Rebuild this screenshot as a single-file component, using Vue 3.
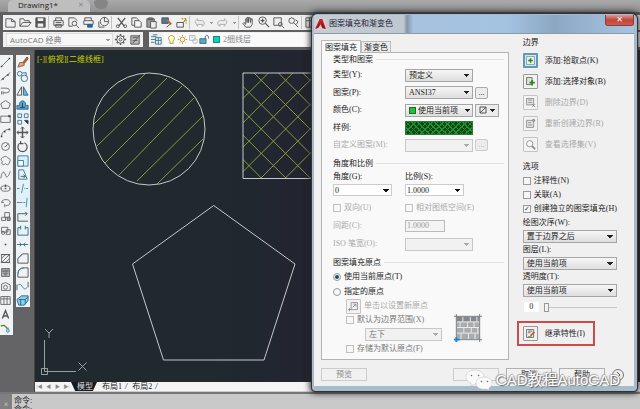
<script setup>
import { ref } from 'vue'

const icons = {
  new: '<path d="M2 3h6l4 3v6H2z"/><path d="M8 3v3h4"/>',
  open: '<path d="M1 11V3h4l1 2h5v2M1 11l3-4h9l-3 4z"/>',
  save: '<path fill="#555" d="M2 2h10v10H2z"/><path fill="#eee" stroke="none" d="M4 2.5h6v3H4zM4 8h6v3.500H4z"/>',
  print: '<path d="M4 5V2h6v3M2 5h10v5H2zM4 9h6v3H4z"/><path d="M4 7h6"/>',
  preview: '<path d="M2 2h6l3 3M2 2v9h4"/><circle cx="8" cy="8" r="2.500"/><path d="M10 10l3 3"/>',
  plot: '<path d="M3 5V2h7v3M2 5h10v4H2z"/><path fill="#28649c" stroke="#28649c" d="M6 9h5v3H6z"/>',
  publish: '<circle cx="8" cy="6" r="4.500"/><path d="M8 1v5h4M2 6v6h6"/>',
  cut: '<path d="M3 2l7 9M11 2L4 11" stroke-width="1.400"/><circle cx="3" cy="11" r="1.500"/><circle cx="11" cy="11" r="1.500"/>',
  copyclip: '<path d="M2 2h5l2 2v6H2z"/><path fill="#f4f4f4" d="M5 5h5l2 2v5H5z"/>',
  paste: '<path fill="#999" d="M2 3h8v9H2z"/><path d="M4 2h4v2H4z"/><path fill="#eee" d="M6 6h6v7H6z"/>',
  match: '<path fill="#5572a5" d="M2 2h7v6H2z"/><path stroke="#c66a26" stroke-width="2" d="M8 4l4 5"/><path d="M7 12l5-4"/>',
  block: '<path d="M2 7h7v5H2zM9 7l3-4"/><path stroke="#d5a000" stroke-width="1.500" stroke-dasharray="2 1" d="M7 3h5v5"/>',
  undo: '<path stroke="#aaa" d="M2 6l3-3v2h4c4 0 4 5 1 6V9H5v2z"/>',
  redo: '<path stroke="#aaa" d="M12 6L9 3v2H5c-4 0-4 5-1 6V9h5v2z"/>',
  hand: '<path d="M4 12L1 8l1-1 2 2V3h1.500v4V1.500H7V7l.5-5H9v5l1-4h1v6l-2 3z"/>',
  zoom: '<circle cx="6" cy="5" r="4"/><path d="M4 5h4M6 3v4M9 8l4 4" stroke-width="1.300"/>',
  zoomwin: '<path d="M2 2h8v8H2z"/><circle cx="9" cy="9" r="2"/><path d="M11 11l2 2"/>',
  zoomprev: '<circle cx="5" cy="5" r="3"/><path d="M7 7l5 5M9 4l3 2-2 3"/>',
  gear: '<circle cx="7" cy="7" r="4"/><circle cx="7" cy="7" r="1.500"/><path d="M7 1v2M7 11v2M1 7h2M11 7h2M3 3l1 1M10 10l1 1M3 11l1-1M10 4l1-1" stroke-width="1.600"/>',
  custom: '<path d="M2 3h9v9H2z" fill="#bbb"/><path d="M4 5h5M4 8h5M4 11L12 2"/>',
  layers: '<path stroke="#397b94" d="M1 4h6M3 2h5M1 7h5M6 5h6v7H6zM1 10h4M6 8h6M9 5v7"/>',
  bulb: '<path stroke="#998a29" fill="#fff9c4" d="M5 9C2 6 3 2 7 2s5 4 2 7v3H5z"/>',
  sun: '<circle cx="7" cy="7" r="3" stroke="#aa8c28" fill="#fff7b5"/><path stroke="#aa8c28" d="M7 1v2M7 11v2M1 7h2M11 7h2M3 3l1 1M10 10l1 1M3 11l1-1M10 4l1-1"/>',
  vp: '<path stroke="#aaa" d="M2 2h7v6H2zM4 4h3"/><circle cx="9" cy="9" r="3" stroke="#aaa"/>',
  lock: '<path stroke="#216477" fill="#60a6bc" d="M1 6h8v6H1z"/><path stroke="#216477" d="M8 6V3q2-3 4 0v3"/>',
  line: '<path d="M2 12L12 2"/><path d="M1 11h2v2H1zM11 1h2v2h-2z" fill="#444" stroke="none"/>',
  xline: '<path d="M1 12L13 2"/><path d="M3 9h2v2H3zM9 4h2v2H9z" fill="#444" stroke="none"/>',
  pline: '<path d="M1 4h7q4 0 4 3t-4 3H4M2 8v4M4 8v4"/>',
  polygon: '<path d="M7 2l6 4-2 6H3L1 6z"/>',
  rect: '<path d="M1 4h12v8H1z"/><path d="M11 3h2v2h-2z" fill="#444"/>',
  arc: '<path d="M2 12C2 7 6 3 12 3"/><path d="M1 11h2v2H1zM5 5h2v2H5zM11 2h2v2h-2z" fill="#444" stroke="none"/>',
  circle: '<circle cx="7" cy="7" r="5"/><path d="M7 7l3-3M6 7h2"/>',
  cloud: '<path d="M4 3c3-3 6 0 6 1 4 0 3 4 2 5 0 4-4 4-5 2-3 3-6 0-4-3C0 6 2 3 4 3z"/>',
  spline: '<path d="M1 12C3 0 6 4 7 8s4 2 6-5"/>',
  ellipse: '<ellipse cx="7" cy="7" rx="6" ry="3.500"/><path d="M7 2v3M6 7h2M1 7h1M12 7h1" stroke-width="1.600"/>',
  earc: '<path d="M2 7c0-5 11-5 11 0 0 3-3 4-6 4M2 7h3M6 9v4"/>',
  insert: '<path d="M6 2h6v6H6zM2 8h5v4H2z"/><path d="M9 8h4v4H9z" fill="#aaa"/>',
  make: '<path d="M2 3h8v6H2zM8 6h5v6H8z"/><circle cx="4" cy="10" r="2"/>',
  point: '<path d="M6 6h2v2H6z" fill="#444" stroke="none"/>',
  hatch: '<path d="M2 2h10v10H2zM2 7l5-5M2 12L12 2M7 12l5-5M1 2h12M1 12h12"/>',
  gradient: '<path d="M2 2h10v10H2z" fill="#bbb"/><path d="M3 4h8M3 6h8M4 8h6M5 10h4" stroke="#555"/>',
  region: '<path d="M2 12V4l5-2 6 3v7z"/><circle cx="7" cy="8" r="2.500"/>',
  table: '<path d="M1 2h12v10H1zM1 5h12M5 2v10M9 2v10"/>',
  text: '<path d="M3 12L7 2l4 10M4.500 9h5" stroke-width="1.800"/>',
  colors: '<path stroke="#46861e" stroke-width="1.600" d="M1 4q5-3 8 3"/><path stroke="#2374aa" fill="#b6def1" d="M10 6l-2 4q2 4 4 0z"/>',
  erase: '<path d="M8 6l4-5 1 2-4 5z" fill="#bd6c25" stroke="#88502b"/><path d="M2 12l2-5 4 0 1 3z" fill="#e4a478" stroke="#87644e"/>',
  copy: '<g stroke="#337498"><circle cx="4" cy="4" r="2.500"/><circle cx="9" cy="9" r="3.500"/><path d="M7 3h4v3"/></g>',
  mirror: '<path d="M6 3v9H1z"/><path d="M8 3v9h5z" fill="#75b6d5" stroke="#226b91"/>',
  offset: '<path d="M1 12V8h3V5q3-4 6 0v3h3v4z" fill="#62a8cc" stroke="#226b91"/><path d="M4 10h6M7 5v5" stroke="#245"/>',
  array: '<g stroke="#337daa"><path d="M2 2h4v4H2zM9 2h4v4H9zM2 9h4v4H2z"/></g><path d="M9 9h4v4z" fill="#222"/>',
  move: '<path d="M7 1v12M1 7h12" stroke-width="1.500"/><path d="M5 3l2-2 2 2M5 11l2 2 2-2M3 5L1 7l2 2M11 5l2 2-2 2"/>',
  rotate: '<path d="M9 3a5 5 0 1 1-4 0M5 1v3h3" stroke-width="1.300"/>',
  scale: '<path d="M2 2h11v11H2z" stroke="#337daa" fill="#d9f0fb"/><path d="M2 7h6v6H2z" stroke="#337daa" fill="#fff"/>',
  stretch: '<path d="M3 2h5l4 10H3z" stroke="#337daa"/><path d="M5 9h5M8 7l2 2-2 2"/>',
  trim: '<path d="M1 7h3M6 12L8 2M9 7h1M11 7h2" stroke="#4586a6"/>',
  extend: '<path d="M1 7h6" stroke="#777"/><path d="M8 7h2M11 12l1-10" stroke="#4586a6"/>',
  breakat: '<path d="M2 12V4h10M10 2l2 2-2 2M2 12h11"/>',
  breakk: '<path d="M5 4H2v8h11V4h-3M5 2v4M10 2v4" stroke="#28708f"/>',
  join: '<path d="M1 7h12M4 5l2 2-2 2M10 5L8 7l2 2" stroke="#28708f"/>',
  chamfer: '<path d="M2 12V7l5-5h6v10z"/><path d="M2 7l5-5" stroke="#2888bb"/>',
  fillet: '<path d="M2 12V9q0-7 7-7h4v10z"/><path d="M2 9q0-7 7-7" stroke="#2888bb"/>',
  blend: '<path d="M1 11V5M13 2v6"/><path d="M2 6c4-6 5 8 10 2" stroke="#2888bb"/>',
  explode: '<path d="M1 6l5-4h7v5l-4 5H3z" fill="#91cdec" stroke="#226b91"/><path d="M3 6h7v5M5 6v6M10 6l3-3" stroke="#226b91"/>',
  pick: '<path d="M2 2h10v10H2z" fill="#e9f5ee" stroke="#889"/><path d="M7 4v6M4 7h6" stroke="#2e8420" stroke-width="2"/>',
  select: '<path d="M2 2h7v9H2z" fill="#dde6d8"/><path d="M9 5v7M5.500 8.500h7" stroke="#2e8420" stroke-width="2.200"/>',
  remove: '<path d="M2 2h9v8H2z" fill="#ddd"/><path d="M4 4h5M4 7h5M9 9l4 4M13 9l-4 4"/>',
  recreate: '<path d="M2 3h9v9H2z" fill="#ddd"/><path d="M4 6h4M4 9h5"/><circle cx="11" cy="3" r="1.500" fill="#888"/>',
  view: '<circle cx="6" cy="6" r="4" fill="#f5faff"/><path d="M9 9l4 4" stroke-width="2"/>',
  inherit: '<path d="M2 2h9v10H2z" fill="#eee"/><path d="M4 4h5M4 6h3" /><path d="M12 5L7 10" stroke="#b76033" stroke-width="2"/><path d="M4 11h4" stroke="#46861e"/>',
  origin: '<path d="M4 2h8v9H4z" fill="#eee"/><path d="M2 9v4M0 11h4M6 8l4-4M7 4h3v3"/>',
}

const standardBar = [
  ['new', 'open', 'save'],
  ['print', 'preview', 'plot', 'publish'],
  ['cut', 'copyclip', 'paste', 'match', 'block'],
  ['undo', 'drop', 'redo', 'drop'],
  ['hand', 'zoom', 'zoomwin', 'zoomprev'],
  ['table', 'layers'],
]
const drawBar = ['line', 'xline', 'pline', 'polygon', 'rect', 'arc', 'circle', 'cloud', 'spline', 'ellipse', 'earc', 'insert', 'make', 'point', 'hatch', 'gradient', 'region', 'table', 'text', 'colors']
const modifyBar = ['erase', 'copy', 'mirror', 'offset', 'array', 'move', 'rotate', 'scale', 'stretch', 'trim', 'extend', 'breakat', 'breakk', 'join', 'chamfer', 'fillet', 'blend', 'explode']
const boundary = [
  { icon: 'pick', text: '添加:拾取点(K)', on: true },
  { icon: 'select', text: '添加:选择对象(B)' },
  { icon: 'remove', text: '删除边界(D)', off: true },
  { icon: 'recreate', text: '重新创建边界(R)', off: true },
  { icon: 'view', text: '查看选择集(V)', off: true },
]
const optionSelects = [
  { id: 'order', label: '绘图次序(W):', value: '置于边界之后' },
  { id: 'layer', label: '图层(L):', value: '使用当前项' },
  { id: 'alpha', label: '透明度(T):', value: '使用当前项' },
]
const origin = ref('current')
const opacity = ref(0)

// ANSI37 hatch: two families of 45 degree lines, step 24.4 along x
const falling = Array.from({ length: 9 }, (_, i) => 59 + i * 24.4)
const rising = Array.from({ length: 10 }, (_, i) => 317 + i * 24.4)
</script>

<template>
  <div class="app">
    <header class="files">
      <button class="file">Drawing1*<span class="x">✕</span></button>
      <button class="newtab" aria-label="新建"></button>
    </header>

    <div class="bars">
      <div class="bar standard">
        <div v-for="(group, g) in standardBar" :key="g" class="set">
          <template v-for="(name, i) in group" :key="i">
            <span v-if="name === 'drop'" class="drop"></span>
            <button v-else class="tool" :aria-label="name"><svg class="ico" viewBox="0 0 14 14" v-html="icons[name]"></svg></button>
          </template>
        </div>
      </div>
      <div class="second">
        <div class="bar space">
          <select class="workspace" aria-label="工作空间"><option>AutoCAD 经典</option></select>
          <button class="tool" aria-label="设置"><svg class="ico" viewBox="0 0 14 14" v-html="icons.gear"></svg></button>
          <button class="tool" aria-label="自定义"><svg class="ico" viewBox="0 0 14 14" v-html="icons.custom"></svg></button>
        </div>
        <div class="bar layerbar">
          <button class="tool" aria-label="图层特性"><svg class="ico" viewBox="0 0 14 14" v-html="icons.layers"></svg></button>
          <div class="layer">
            <svg v-for="n in ['bulb', 'sun', 'vp', 'lock']" :key="n" class="small" viewBox="0 0 14 14" v-html="icons[n]"></svg>
            <i class="swatch cyan"></i><span>2细线层</span>
          </div>
        </div>
      </div>
    </div>

    <main class="work">
      <nav class="rail draw">
        <button v-for="n in drawBar" :key="n" class="railtool" :aria-label="n"><svg class="ico" viewBox="0 0 14 14" v-html="icons[n]"></svg></button>
      </nav>
      <nav class="rail modify">
        <button v-for="n in modifyBar" :key="n" class="railtool" :aria-label="n"><svg class="ico" viewBox="0 0 14 14" v-html="icons[n]"></svg></button>
      </nav>
      <section class="view">
        <div class="canvas">
          <svg class="drawing" viewBox="35 50 290 332" width="290" height="332">
            <defs><clipPath id="sq"><path d="M243 73h90v105.500h-90z" /></clipPath></defs>
            <text x="37" y="62" class="vplabel">[-][俯视][二维线框]</text>
            <path class="hatchline" d="M145 74L94 124M167 78L97 146M182 86L105 163M194 98L119 175M203 116L137 181M203 139L157 184" />
            <circle class="shape" cx="149" cy="129" r="56" />
            <g class="hatchline" clip-path="url(#sq)">
              <path v-for="c in falling" :key="'f' + c" :d="`M${c + 60} 60L${c + 190} 190`" />
              <path v-for="c in rising" :key="'r' + c" :d="`M${c - 60} 60L${c - 190} 190`" />
            </g>
            <path class="shape" d="M333 73H243v105.500h90" />
            <path class="shape" d="M213.700 205.500L295 264l-31 96H163.500l-31-96z" />
            <path class="ucs" d="M44.500 371.500V340M44.500 371.500H76M41.500 368.500h6v6h-6zM78.500 362.500l8 8M86.500 362.500l-8 8M45 329l4 4 4-4M49 333v5" />
          </svg>
        </div>
        <div class="layouts">
          <button class="nav">|◀</button><button class="nav">◀</button><button class="nav">▶</button><button class="nav">▶|</button>
          <button class="sheet active">模型</button><button class="sheet">布局1</button><i>/</i><button class="sheet">布局2</button><i>/</i>
        </div>
      </section>
    </main>

    <footer class="command"><div class="grip">×</div><div class="log"><p>命令:</p><p>命令:</p></div></footer>

    <section class="dialog" role="dialog" aria-label="图案填充和渐变色">
      <div class="titlebar">
        <svg class="logo" viewBox="0 0 12 12"><path d="M0 0h12v12H0z" fill="#d5d1d3" /><path d="M5 0h3l4 11-4-1-2-4-2 3-4 2z" fill="#c3212c" /><path d="M6 3l-2 6-3 2zM7 3l4 8-3-2z" fill="#77101a" /></svg>
        <h1>图案填充和渐变色</h1>
        <button class="close" aria-label="关闭">✕</button>
      </div>

      <div class="body">
        <div class="columns">
          <div class="left">
            <div class="tabs"><button class="tab on">图案填充</button><button class="tab">渐变色</button></div>
            <div class="panel">
              <section class="group">
                <h2>类型和图案</h2>
                <div class="rows kinds">
                  <label for="type">类型(Y):</label>
                  <select id="type"><option>预定义</option></select><span></span>
                  <label for="pattern">图案(P):</label>
                  <select id="pattern"><option>ANSI37</option></select><button class="more" aria-label="浏览图案">...</button>
                  <label for="color">颜色(C):</label>
                  <div class="colorbox"><i class="swatch green"></i><select id="color" class="bare"><option>使用当前项</option></select></div>
                  <button class="bgcolor" aria-label="背景色"><svg class="mini" viewBox="0 0 8 8"><path d="M1 1h6v6H1zM1 7l6-6" /></svg><i class="tri"></i></button>
                  <span>样例:</span>
                  <button class="sample" aria-label="样例"></button><span></span>
                  <label for="custom" class="dim">自定义图案(M):</label>
                  <select id="custom" disabled></select><button class="more" disabled aria-label="浏览自定义图案">...</button>
                </div>
              </section>

              <section class="group">
                <h2>角度和比例</h2>
                <div class="rows angles">
                  <label for="angle">角度(G):</label><label for="ratio">比例(S):</label>
                  <select id="angle" class="edit"><option>0</option></select><select id="ratio" class="edit"><option>1.0000</option></select>
                </div>
                <div class="rows extra">
                  <label class="check dim"><input type="checkbox" disabled />双向(U)</label>
                  <label class="check dim"><input type="checkbox" disabled />相对图纸空间(E)</label>
                  <label for="gap" class="dim">间距(C):</label><input id="gap" class="num" value="1.0000" disabled />
                  <label for="iso" class="dim">ISO 笔宽(O):</label><select id="iso" disabled></select>
                </div>
              </section>

              <section class="group">
                <h2>图案填充原点</h2>
                <label class="check radio"><input v-model="origin" type="radio" name="origin" value="current" />使用当前原点(T)</label>
                <label class="check radio"><input v-model="origin" type="radio" name="origin" value="custom" />指定的原点</label>
                <div class="originset">
                  <div class="settings">
                    <div class="line dim"><button class="ibtn" disabled aria-label="设置新原点"><svg class="ico" viewBox="0 0 14 14" v-html="icons.origin"></svg></button>单击以设置新原点</div>
                    <label class="check mid"><input type="checkbox" disabled />默认为边界范围(X)</label>
                    <select class="corner" disabled aria-label="范围位置"><option>左下</option></select>
                    <label class="check mid"><input type="checkbox" disabled />存储为默认原点(F)</label>
                  </div>
                  <svg class="bricks" viewBox="0 0 30 30">
                    <path d="M3 3h24v24H3z" fill="#a9acaf" /><path d="M3 3h24v5H3z" fill="#84888c" />
                    <path d="M3 8.500h24M3 14.500h24M3 20.500h24M9.500 3v5M17.500 3v5M24.500 3v5M6.500 9v5M14.500 9v5M21.500 9v5M10.500 15v5M18.500 15v5M25.500 15v5M7.500 21v6M15.500 21v6M22.500 21v6" stroke="#f0f0f0" />
                    <path d="M2.500 0v27M0 2.500h30M27.500 0v30M3 27.500h27" stroke="#777" /><path d="M0 27.500h6M2.500 25v5" stroke="#1686d9" stroke-width="2" />
                  </svg>
                </div>
              </section>
            </div>
          </div>

          <div class="right">
            <h2>边界</h2>
            <div v-for="b in boundary" :key="b.icon" class="action" :class="{ dim: b.off }">
              <button class="ibtn" :class="{ focus: b.on }" :disabled="b.off" :aria-label="b.text"><svg class="ico" viewBox="0 0 14 14" v-html="icons[b.icon]"></svg></button>{{ b.text }}
            </div>
            <h2 class="opt">选项</h2>
            <label class="check"><input type="checkbox" />注释性(N)</label>
            <label class="check"><input type="checkbox" />关联(A)</label>
            <label class="check"><input type="checkbox" checked />创建独立的图案填充(H)</label>
            <template v-for="s in optionSelects" :key="s.id">
              <label :for="s.id" class="over">{{ s.label }}</label>
              <select :id="s.id" class="wide"><option>{{ s.value }}</option></select>
            </template>
            <div class="slide">
              <output>{{ opacity }}</output>
              <input v-model="opacity" type="range" min="0" max="90" aria-label="透明度" />
            </div>
            <div class="inherit">
              <button class="ibtn" aria-label="继承特性"><svg class="ico" viewBox="0 0 14 14" v-html="icons.inherit"></svg></button>继承特性(I)
            </div>
          </div>
        </div>

        <div class="buttons">
          <button class="push faded">预览</button>
          <button class="push ok" aria-label="确定"></button>
          <button class="push">取消</button>
          <button class="push">帮助</button>
          <button class="round" aria-label="更多选项"><svg class="mini" viewBox="0 0 8 8"><path d="M3 1l3 3-3 3" /></svg></button>
        </div>
      </div>

      <div class="mark">
        <svg class="chat" viewBox="0 0 28 22"><path d="M10 1c5 0 9 3 9 7s-4 7-9 7l-4 2v-3C3 13 1 11 1 8c0-4 4-7 9-7z" /><path d="M19 8c4 0 8 2 8 6 0 2-1 4-3 5v2l-3-1c-6 1-10-2-10-6s4-6 8-6z" /><path class="eye" d="M6 6h1v1H6zM13 6h1v1h-1zM16 12h1v1h-1zM22 12h1v1h-1z" /></svg>
        <span>CAD教程AutoCAD</span>
      </div>
    </section>
  </div>
</template>

<style>
body {
  margin: 0;
  background: #646466;
}
</style>

<style scoped>
.app {
  position: relative;
  display: flex;
  flex-direction: column;
  height: 100vh;
  overflow: hidden;
  background: #646466;
  color: #222;
  font: 8px/12px "Liberation Serif", "Noto Sans CJK SC", sans-serif;
}
.app * { box-sizing: border-box; }
button, select, input {
  margin: 0;
  padding: 0;
  border: 0;
  background: none;
  color: inherit;
  font: inherit;
}
h1, h2, p { margin: 0; font: inherit; }
.ico { display: block; width: 13px; height: 13px; }
.ico, .small, .mini { fill: none; stroke: #555; }

.files {
  display: flex;
  flex: none;
  height: 12px;
  padding-left: 8px;
  background: linear-gradient(#a9a9a9, #929292);
}
.file {
  display: flex;
  justify-content: space-between;
  width: 82px;
  height: 12px;
  padding: 0 6px 0 10px;
  border-radius: 5px 5px 0 0;
  background: #bebebe;
  font: 8px/10px "Open Sans", sans-serif;
}
.file .x { color: #888; font-size: 7px; }
.newtab { width: 14px; height: 9px; margin-left: 4px; border-radius: 3px 3px 7px 7px; background: #858585; }

.bars {
  display: flex;
  flex: none;
  flex-direction: column;
  gap: 2px;
  padding: 3px 0 3px 3px;
  background: #606062;
}
.bar { display: flex; align-items: center; height: 15px; background: #f0f0f0; }
.set { display: flex; align-items: center; }
.set + .set { border-left: 1px solid #c2c2c2; padding-left: 2px; }
.tool { width: 15px; height: 13px; padding: 0 1px; }
.drop {
  width: 8px; height: 3px;
  background: conic-gradient(from -45deg at 50% 100%, #999 90deg, transparent 0) no-repeat center / 4px 2px;
}
.second { display: flex; gap: 6px; }
.space { width: 140px; padding-left: 3px; }
.workspace {
  flex: 1;
  height: 13px;
  padding-left: 3px;
  border: 1px solid #ddd;
  color: #777;
  font: 8px/11px "Open Sans", "Noto Sans CJK SC", sans-serif;
}
.layerbar { flex: 1; }
.layer { display: flex; flex: 1; align-items: center; height: 13px; padding-left: 2px; background: #fafafa; color: #888; }
.small { width: 11px; height: 11px; }
.swatch { flex: none; width: 7px; height: 7px; border: 1px solid #287; }
.cyan { margin: 0 3px; background: #0cd2b8; }
.green { background: #19c832; border-color: #263; }

.work { display: flex; flex: 1; min-height: 0; }
.rail { flex: none; align-self: flex-start; margin-top: 5px; background: #f1f2f3; }
.draw { width: 13px; }
.modify { width: 14px; margin-left: 3px; background: linear-gradient(#f1f2f3 40%, #dff1fa 55%, #f1f2f3 75%); }
.railtool { display: block; width: 13px; height: 14px; }
.draw .ico { width: 11px; }
.view { display: flex; flex: 1; flex-direction: column; min-width: 0; margin-left: 4px; border-left: 1px solid #444; }
.canvas { flex: 1; min-height: 0; overflow: hidden; background: linear-gradient(90deg, #1f292e 30%, #232431 45%); }
.drawing { display: block; }
.shape { fill: none; stroke: #c4c8ca; }
.hatchline { fill: none; stroke: #8b9a3a; }
.ucs { fill: none; stroke: #9a9fa2; }
.vplabel { fill: #c8d000; font-size: 8px; }
.layouts { display: flex; flex: none; align-items: center; height: 10px; background: #f4f4f4; border-bottom: 1px solid #ccc; }
.nav { width: 9px; color: #888; font-size: 5px; line-height: 9px; }
.sheet { padding: 0 3px 0 5px; line-height: 9px; }
.sheet.active { width: 26px; background: #161a1e; color: #ddd; clip-path: polygon(0 0, 100% 0, 84% 100%, 16% 100%); }
.layouts i { line-height: 9px; }

.command { display: flex; flex: none; height: 17px; border-top: 2px solid #777; background: #c9c9ca; overflow: hidden; }
.grip { width: 12px; background: #808082; color: #ddd; text-align: center; line-height: 22px; }
.log { padding: 2px 0 0 2px; line-height: 9px; }

.dialog {
  position: absolute;
  top: 14px;
  left: 312px;
  width: 325px;
  border: 2px solid #a9bac6;
  border-width: 1px 3px 5px 2px;
  border-bottom-color: #a5bccb;
  border-radius: 5px 5px 3px 3px;
  outline: 1px solid #30343a;
  box-shadow: 0 0 6px 2px #222;
  background: #f0f0f1;
}
.titlebar {
  display: flex;
  align-items: center;
  height: 18px;
  padding-left: 1px;
  border-radius: 4px 4px 0 0;
  background: linear-gradient(90deg, #c6ccd3, #bfc7d0 28%, #8496aa 29%, #a7c2de 31%, #a4c3e3 60%, #8ba7c2 75%, #a7c4e2);
}
.logo { width: 11px; height: 11px; }
h1 { flex: 1; margin-left: 3px; color: #223; }
.close {
  align-self: flex-start;
  width: 29px;
  height: 11px;
  border: 1px solid #8e3c3b;
  border-top: 0;
  border-radius: 0 0 3px 3px;
  background: linear-gradient(#da9a92, #c1443a 50%, #cf5c4a);
  color: #fff;
  font: bold 8px/10px "DejaVu Sans", sans-serif;
}
.body { padding: 0 10px 5px 7px; border-top: 1px solid #8d9aa6; }
.columns { display: flex; }
.left { flex: none; width: 62%; padding-top: 6px; }
.tabs { display: flex; align-items: flex-end; height: 12px; }
.tab { height: 11px; padding: 0 2px; border: 1px solid #bbb; border-bottom: 0; background: #ececec; line-height: 9px; }
.tab.on { height: 13px; margin-bottom: -1px; padding: 0 3px; background: #f9f9f9; line-height: 11px; }
.panel { padding: 0 4px 3px 6px; border: 1px solid #b4b4b4; background: #f9f9f9; }
.group { padding-left: 5px; }
.group + .group { margin-top: 3px; }
.group h2 { display: flex; align-items: center; gap: 3px; height: 13px; }
.group h2::after { content: ""; flex: 1; height: 1px; background: #e0e0e0; }
.rows { display: grid; align-items: center; }
.kinds { grid-template-columns: 70px 68px 1fr; grid-template-rows: 18px 17px 18px 17px 18px; column-gap: 2px; }
.angles { grid-template-columns: 72px 1fr; grid-template-rows: 14px 12px; }
.extra { grid-template-columns: 72px 1fr; grid-auto-rows: 18px; margin-top: 3px; }
.dim { color: #a9a9a9; }
.mid { color: #777; }

select {
  appearance: none;
  height: 13px;
  padding: 0 12px 0 3px;
  border: 1px solid #a5a5a5;
  border-radius: 0;
  background:
    conic-gradient(from -45deg at 50% 100%, #222 90deg, transparent 0) no-repeat right 3px center / 6px 3px,
    linear-gradient(#f6f6f6, #dedede);
  line-height: 11px;
  white-space: nowrap;
}
select:disabled {
  opacity: 1;
  border-color: #c8c8c8;
  background:
    conic-gradient(from -45deg at 50% 100%, #aaa 90deg, transparent 0) no-repeat right 3px center / 6px 3px,
    #f1f1f1;
  color: #777;
}
select.workspace {
  background: conic-gradient(from -45deg at 50% 100%, #999 90deg, transparent 0) no-repeat right 2px center / 4px 2px, #f7f7f7;
}
select.edit {
  width: 59px;
  height: 12px;
  padding-left: 1px;
  border-color: #ccc;
  background: conic-gradient(from -45deg at 50% 100%, #111 90deg, transparent 0) no-repeat right 2px center / 6px 3px, #fff;
}
#iso { width: 68px; }
.more { width: 13px; height: 12px; border: 1px solid #aaa; border-radius: 2px; background: #ececec; line-height: 8px; }
.more:disabled { border-color: #ccc; color: #aaa; }
.colorbox {
  display: flex; align-items: center; height: 13px; padding-left: 3px;
  border: 1px solid #a5a5a5; background: linear-gradient(#f6f6f6, #dedede);
}
select.bare {
  flex: 1; min-width: 0; height: 11px; padding: 0 8px 0 2px; border: 0;
  background: conic-gradient(from -45deg at 50% 100%, #222 90deg, transparent 0) no-repeat right 2px center / 6px 3px;
}
.bgcolor { display: flex; align-items: center; justify-content: space-between; width: 24px; height: 13px; padding: 0 3px; border: 1px solid #a5a5a5; background: #ececec; }
.mini { width: 8px; height: 8px; }
.tri { width: 6px; height: 3px; background: conic-gradient(from -45deg at 50% 100%, #222 90deg, transparent 0); }
.sample {
  height: 14px;
  border: 1px solid #2a7a34;
  background:
    repeating-linear-gradient(45deg, #258c32 0 1px, transparent 1px 4px),
    repeating-linear-gradient(-45deg, #258c32 0 1px, #0b4a16 1px 4px);
}
.num { width: 40px; height: 12px; padding-left: 1px; border: 1px solid #bbb; background: #f4f4f4; color: #999; }

.check { display: flex; align-items: center; gap: 3px; height: 14px; white-space: nowrap; }
.check input {
  appearance: none;
  flex: none;
  display: grid;
  place-items: center;
  width: 8px;
  height: 8px;
  border: 1px solid #9a9a9a;
  background: #f7f7f7;
}
.check input:disabled { border-color: #c0c0c0; }
.check input[type="checkbox"]:checked::before { content: "✓"; color: #345; font: bold 7px/6px "DejaVu Sans", sans-serif; }
.check.radio { height: 15px; }
.check input[type="radio"] { border-radius: 50%; }
.check input[type="radio"]:checked::before { content: ""; width: 4px; height: 4px; border-radius: 50%; background: #1d4f66; }
.originset { display: flex; align-items: center; gap: 12px; padding-left: 13px; }
.settings { flex: none; width: 96px; }
.line { display: flex; align-items: center; gap: 3px; height: 14px; white-space: nowrap; }
.corner { display: block; width: 77px; margin: 1px 0 1px 19px; }
.bricks { width: 28px; height: 28px; fill: none; }

.ibtn { flex: none; display: grid; place-items: center; width: 15px; height: 15px; border: 1px solid #999; border-radius: 1px; background: #f3f3f3; }
.ibtn .ico { width: 11px; height: 11px; }
.ibtn:disabled { border-color: #c4c4c4; }
.ibtn:disabled .ico { opacity: .7; }
.ibtn.focus { border: 2px solid #5d9ab8; background: #cfe8f3; }
.right { flex: 1; min-width: 0; padding: 3px 7px 0 14px; }
.right h2 { height: 13px; }
.right h2.opt { margin-top: 6px; }
.action { display: flex; align-items: center; gap: 7px; height: 21px; white-space: nowrap; }
.over { display: block; height: 14px; line-height: 14px; }
.wide { display: block; width: 100%; }
.slide { display: flex; align-items: center; gap: 5px; height: 20px; padding-left: 1px; }
output { flex: none; width: 15px; height: 10px; background: #fff; text-align: center; line-height: 10px; }
input[type="range"] { appearance: none; flex: 1; min-width: 0; height: 9px; background: linear-gradient(#c6c6c6, #c6c6c6) no-repeat center / 100% 1px; }
input[type="range"]::-webkit-slider-thumb { appearance: none; width: 5px; height: 9px; border: 1px solid #999; background: #f2f2f2; }
.inherit {
  display: flex;
  align-items: center;
  gap: 7px;
  width: 78px;
  height: 25px;
  margin: 4px 0 0 -6px;
  padding-left: 4px;
  border: 2px solid #cf4b4b;
  white-space: nowrap;
}

.buttons { display: flex; align-items: center; gap: 7px; margin-top: 8px; }
.push { width: 46px; height: 13px; border: 1px solid #b0b0b0; background: #f1f1f1; line-height: 10px; }
.faded { color: #888; border-color: #ccc; }
.ok { margin-left: auto; border-color: #ccc; }
.round { display: grid; place-items: center; width: 12px; height: 12px; border: 1px solid #777; border-radius: 50%; background: #eee; }
.mark {
  position: absolute;
  right: 14px;
  bottom: -5px;
  display: flex;
  align-items: center;
  gap: 3px;
  color: #fff;
  font: 15px/20px "Liberation Sans", "Noto Sans CJK SC", sans-serif;
  text-shadow: 1px 1px 1px #666, -1px 0 1px #999, 0 -1px 1px #aaa;
  white-space: nowrap;
  pointer-events: none;
}
.chat { width: 28px; height: 22px; fill: #fbfbfb; stroke: #bbb; stroke-width: .5; }
.chat .eye { fill: #777; stroke: #777; }
</style>
